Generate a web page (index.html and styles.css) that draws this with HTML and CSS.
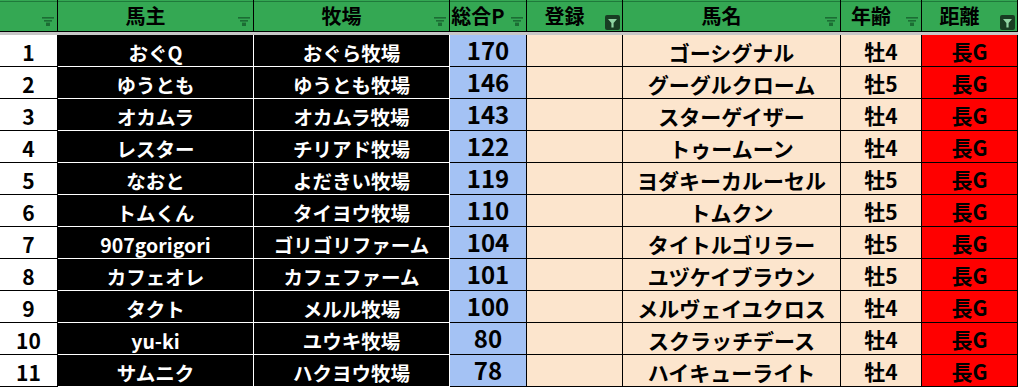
FILE: index.html
```html
<!DOCTYPE html>
<html lang="ja">
<head>
<meta charset="utf-8">
<title>馬主一覧</title>
<link rel="stylesheet" href="styles.css">
</head>
<body>
<div class="sheet">
  <div class="h"><svg class="fi" viewBox="0 0 12 9"><rect x="0" y="0" width="12" height="1.6"/><rect x="2" y="3" width="8" height="1.6"/><rect x="4" y="5.6" width="4" height="3.4"/></svg></div>
  <div class="h">馬主<svg class="fi" viewBox="0 0 12 9"><rect x="0" y="0" width="12" height="1.6"/><rect x="2" y="3" width="8" height="1.6"/><rect x="4" y="5.6" width="4" height="3.4"/></svg></div>
  <div class="h">牧場<svg class="fi" viewBox="0 0 12 9"><rect x="0" y="0" width="12" height="1.6"/><rect x="2" y="3" width="8" height="1.6"/><rect x="4" y="5.6" width="4" height="3.4"/></svg></div>
  <div class="h">総合P<svg class="fi" viewBox="0 0 12 9"><rect x="0" y="0" width="12" height="1.6"/><rect x="2" y="3" width="8" height="1.6"/><rect x="4" y="5.6" width="4" height="3.4"/></svg></div>
  <div class="h">登録<svg class="fa" viewBox="0 0 15 15"><rect x="0" y="0" width="15" height="15" rx="2" class="fa-bg"/><polygon points="3,4 12,4 8.6,8 8.6,12.5 6.4,12.5 6.4,8" class="fa-fg"/></svg></div>
  <div class="h">馬名<svg class="fi" viewBox="0 0 12 9"><rect x="0" y="0" width="12" height="1.6"/><rect x="2" y="3" width="8" height="1.6"/><rect x="4" y="5.6" width="4" height="3.4"/></svg></div>
  <div class="h">年齢<svg class="fi" viewBox="0 0 12 9"><rect x="0" y="0" width="12" height="1.6"/><rect x="2" y="3" width="8" height="1.6"/><rect x="4" y="5.6" width="4" height="3.4"/></svg></div>
  <div class="h">距離<svg class="fa" viewBox="0 0 15 15"><rect x="0" y="0" width="15" height="15" rx="2" class="fa-bg"/><polygon points="3,4 12,4 8.6,8 8.6,12.5 6.4,12.5 6.4,8" class="fa-fg"/></svg></div>

  <div class="freeze"></div>

  <div class="c num">1</div><div class="c own">おぐQ</div><div class="c own">おぐら牧場</div><div class="c pts">170</div><div class="c reg"></div><div class="c horse">ゴーシグナル</div><div class="c age">牡4</div><div class="c dist">長G</div>
  <div class="c num">2</div><div class="c own">ゆうとも</div><div class="c own">ゆうとも牧場</div><div class="c pts">146</div><div class="c reg"></div><div class="c horse">グーグルクローム</div><div class="c age">牡5</div><div class="c dist">長G</div>
  <div class="c num">3</div><div class="c own">オカムラ</div><div class="c own">オカムラ牧場</div><div class="c pts">143</div><div class="c reg"></div><div class="c horse">スターゲイザー</div><div class="c age">牡4</div><div class="c dist">長G</div>
  <div class="c num">4</div><div class="c own">レスター</div><div class="c own">チリアド牧場</div><div class="c pts">122</div><div class="c reg"></div><div class="c horse">トゥームーン</div><div class="c age">牡4</div><div class="c dist">長G</div>
  <div class="c num">5</div><div class="c own">なおと</div><div class="c own">よだきい牧場</div><div class="c pts">119</div><div class="c reg"></div><div class="c horse">ヨダキーカルーセル</div><div class="c age">牡5</div><div class="c dist">長G</div>
  <div class="c num">6</div><div class="c own">トムくん</div><div class="c own">タイヨウ牧場</div><div class="c pts">110</div><div class="c reg"></div><div class="c horse">トムクン</div><div class="c age">牡5</div><div class="c dist">長G</div>
  <div class="c num">7</div><div class="c own">907gorigori</div><div class="c own">ゴリゴリファーム</div><div class="c pts">104</div><div class="c reg"></div><div class="c horse">タイトルゴリラー</div><div class="c age">牡5</div><div class="c dist">長G</div>
  <div class="c num">8</div><div class="c own">カフェオレ</div><div class="c own">カフェファーム</div><div class="c pts">101</div><div class="c reg"></div><div class="c horse">ユヅケイブラウン</div><div class="c age">牡5</div><div class="c dist">長G</div>
  <div class="c num">9</div><div class="c own">タクト</div><div class="c own">メルル牧場</div><div class="c pts">100</div><div class="c reg"></div><div class="c horse">メルヴェイユクロス</div><div class="c age">牡4</div><div class="c dist">長G</div>
  <div class="c num">10</div><div class="c own">yu-ki</div><div class="c own">ユウキ牧場</div><div class="c pts">80</div><div class="c reg"></div><div class="c horse">スクラッチデース</div><div class="c age">牡4</div><div class="c dist">長G</div>
  <div class="c num">11</div><div class="c own">サムニク</div><div class="c own">ハクヨウ牧場</div><div class="c pts">78</div><div class="c reg"></div><div class="c horse">ハイキューライト</div><div class="c age">牡4</div><div class="c dist">長G</div>
</div>
</body>
</html>
```
FILE: styles.css
```css
html, body {
  margin: 0;
  padding: 0;
  background: #ffffff;
  overflow: hidden;
}

.sheet {
  display: grid;
  grid-template-columns: 58px 196px 196px 77px 96px 218px 81px 96px;
  grid-template-rows: 32px 3px repeat(11, 32px);
  width: 1018px;
  font-family: "Noto Sans CJK JP", "Noto Sans", sans-serif;
  font-weight: 700;
  line-height: 1;
  color: #000;
}

.h {
  position: relative;
  box-sizing: border-box;
  display: flex;
  align-items: center;
  justify-content: center;
  padding: 1px 20px 0 0;
  font-size: 20px;
  background: linear-gradient(#34a853 0 1px, #1f7a3b 1px 2px, #34a853 2px);
  border-right: 1px solid #000;
  border-bottom: 1px solid #000;
}

.fi {
  position: absolute;
  right: 3px;
  bottom: 5px;
  width: 12px;
  height: 9px;
  fill: #1c6d34;
}

.fa {
  position: absolute;
  right: 2px;
  bottom: 1px;
  width: 15px;
  height: 15px;
}

.fa-bg { fill: #183d23; }
.fa-fg { fill: #8fd3a2; }

.freeze {
  grid-column: 1 / -1;
  background: #c7c7c7;
}

.c {
  box-sizing: border-box;
  display: flex;
  align-items: center;
  justify-content: center;
  white-space: nowrap;
  border-right: 1px solid #000;
  border-bottom: 1px solid #000;
}

.num {
  background: #fff;
  font-size: 21px;
  padding-top: 4px;
}

.own {
  background: #000;
  color: #fff;
  font-size: 19.5px;
  padding-top: 5px;
  border-right-color: #fff;
  border-bottom-color: #fff;
}

.pts {
  background: #a4c2f4;
  font-size: 24px;
  padding-bottom: 1px;
}

.reg {
  background: #fce5cd;
}

.horse {
  background: #fce5cd;
  font-size: 21px;
  padding-top: 3px;
}

.age {
  background: #fce5cd;
  font-size: 21px;
  padding-top: 1px;
}

.dist {
  background: #ff0000;
  font-size: 21px;
  padding-top: 1px;
}
```
